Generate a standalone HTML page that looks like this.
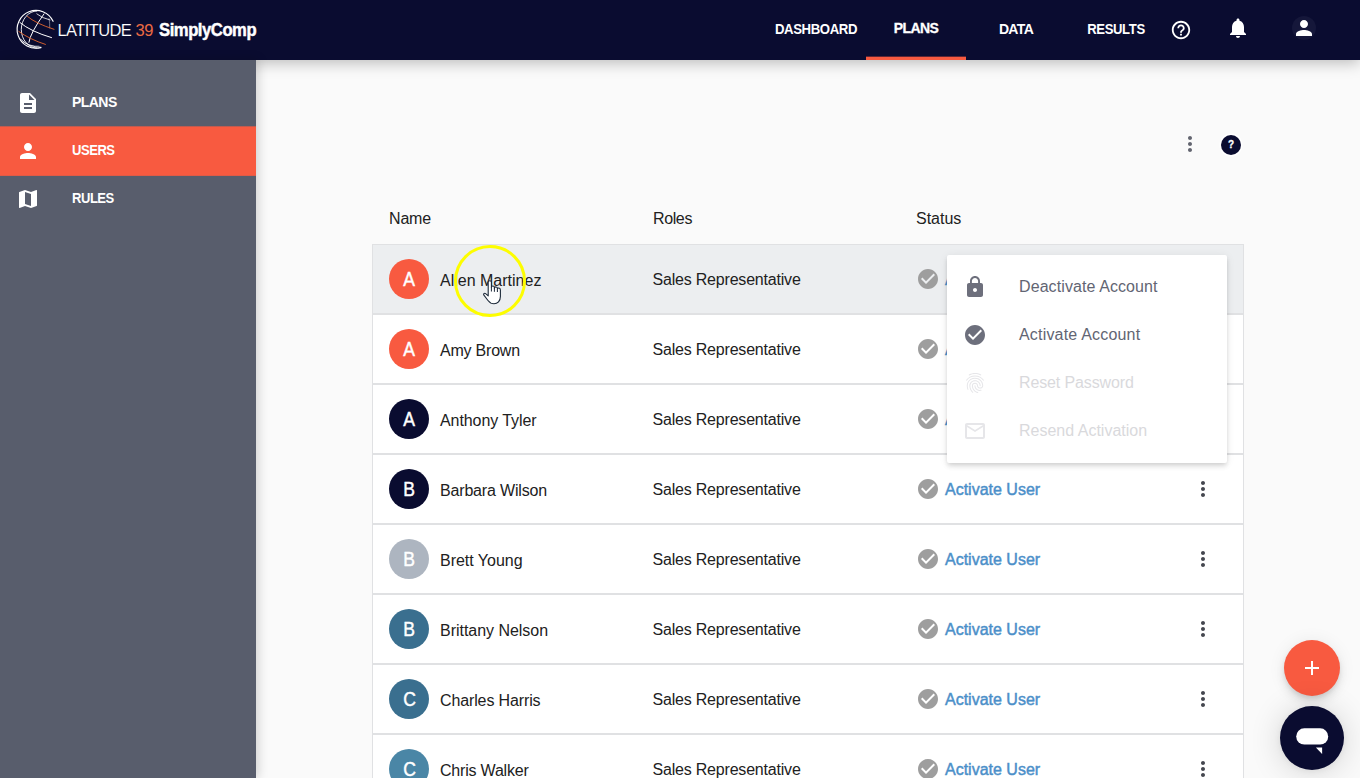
<!DOCTYPE html>
<html lang="en">
<head>
<meta charset="utf-8">
<title>SimplyComp - Users</title>
<style>
*{box-sizing:border-box;margin:0;padding:0}
html,body{width:1360px;height:778px;overflow:hidden;background:#fafafa;font-family:"Liberation Sans",Arial,sans-serif;color:#212121}
#top{position:absolute;left:0;top:0;width:1360px;height:60px;background:#0a0c30;z-index:10;box-shadow:0 3px 14px rgba(0,0,0,.25)}
#side{position:absolute;left:0;top:60px;width:256px;height:718px;background:#585d6c;z-index:11;box-shadow:2px 0 10px rgba(0,0,0,.18)}
.logo-t{position:absolute;top:0;height:60px;line-height:60px;white-space:nowrap;color:#fff}
.nav{position:absolute;top:0;height:60px;line-height:58px;color:#fff;font-weight:bold;font-size:14px;text-align:center;white-space:nowrap}
.nav.act{border-bottom:3px solid #f85a40;-webkit-text-stroke:.3px #fff}
.nav.act:after{content:"";position:absolute;left:0;right:0;bottom:0;height:1px;background:rgba(248,90,64,.35)}
.sitem{position:absolute;left:0;width:256px;height:48px;line-height:48px;color:#fff;font-weight:bold;font-size:14px}
.sitem span{position:absolute;left:72px;top:-1px}
.sitem svg{position:absolute;left:16px;top:12px}
.sitem.act{background:linear-gradient(to bottom,rgba(248,90,64,.65) 0,rgba(248,90,64,.65) 1px,#f85a40 1px,#f85a40 49px,rgba(248,90,64,.85) 49px,rgba(248,90,64,.85) 50px)}
.sitem.act svg{top:13px}
.sitem.act span{top:0}
.th{position:absolute;top:209px;font-size:16px;line-height:19px;color:#212121}
.row{position:absolute;left:372px;width:872px;height:70px;border:1px solid #e0e1e3;background:#fff}
.row.hov{background:#eceef0}
.av{position:absolute;left:16px;top:14px;width:40px;height:40px;border-radius:50%;color:#fff;font-size:19.5px;line-height:41px;text-align:center;-webkit-text-stroke:.45px #fff}
.av b{display:inline-block;font-weight:normal;transform:translateX(.6px) scaleX(.9)}
.nm,.rl,.st{position:absolute;top:0;height:68px;line-height:68px;font-size:16px;white-space:nowrap}
.nm{left:67px;top:2px}
.rl{left:279.5px;top:1px;letter-spacing:-0.2px}
.st{left:572px;top:1px;color:#4b8fc9;-webkit-text-stroke:0.45px #4b8fc9}
.ck{position:absolute;left:543px;top:22px}
.kb{position:absolute;left:818px;top:22px}
#menu{position:absolute;left:947px;top:255px;width:280px;height:208px;background:#fff;border-radius:2px;z-index:8;box-shadow:0 2px 4px -1px rgba(0,0,0,.1),0 4px 5px rgba(0,0,0,.07),0 1px 10px rgba(0,0,0,.07)}
.mi{position:absolute;left:0;width:280px;height:48px;line-height:48px;font-size:16px;color:#626573}
.mi span{position:absolute;left:72px;top:0}
.mi svg{position:absolute;left:16px;top:12px}
.mi.dis{color:#d9d9dc}
</style>
</head>
<body>
<div id="main">
<div class="th" style="left:389px;letter-spacing:-.17px">Name</div><div class="th" style="left:653px;letter-spacing:-.38px">Roles</div><div class="th" style="left:916px">Status</div>
<div class="row hov" style="top:244px"><div class="av" style="background:#f85a40"><b>A</b></div><div class="nm" style="letter-spacing:0px">Allen Martinez</div><div class="rl">Sales Representative</div><svg class="ck" width="24" height="24" viewBox="0 0 24 24"><path fill="#9e9e9e" d="M12 2C6.48 2 2 6.48 2 12s4.48 10 10 10 10-4.48 10-10S17.52 2 12 2zm-2 15l-5-5 1.41-1.41L10 14.17l7.59-7.59L19 8l-9 9z"/></svg><div class="st">Activate User</div><svg class="kb" width="24" height="24" viewBox="0 0 24 24"><path fill="#45474f" d="M12 8c1.1 0 2-.9 2-2s-.9-2-2-2-2 .9-2 2 .9 2 2 2zm0 2c-1.1 0-2 .9-2 2s.9 2 2 2 2-.9 2-2-.9-2-2-2zm0 6c-1.1 0-2 .9-2 2s.9 2 2 2 2-.9 2-2-.9-2-2-2z"/></svg></div>
<div class="row" style="top:314px"><div class="av" style="background:#f85a40"><b>A</b></div><div class="nm" style="letter-spacing:-0.22px">Amy Brown</div><div class="rl">Sales Representative</div><svg class="ck" width="24" height="24" viewBox="0 0 24 24"><path fill="#9e9e9e" d="M12 2C6.48 2 2 6.48 2 12s4.48 10 10 10 10-4.48 10-10S17.52 2 12 2zm-2 15l-5-5 1.41-1.41L10 14.17l7.59-7.59L19 8l-9 9z"/></svg><div class="st">Activate User</div><svg class="kb" width="24" height="24" viewBox="0 0 24 24"><path fill="#45474f" d="M12 8c1.1 0 2-.9 2-2s-.9-2-2-2-2 .9-2 2 .9 2 2 2zm0 2c-1.1 0-2 .9-2 2s.9 2 2 2 2-.9 2-2-.9-2-2-2zm0 6c-1.1 0-2 .9-2 2s.9 2 2 2 2-.9 2-2-.9-2-2-2z"/></svg></div>
<div class="row" style="top:384px"><div class="av" style="background:#0a0c30"><b>A</b></div><div class="nm" style="letter-spacing:-0.08px">Anthony Tyler</div><div class="rl">Sales Representative</div><svg class="ck" width="24" height="24" viewBox="0 0 24 24"><path fill="#9e9e9e" d="M12 2C6.48 2 2 6.48 2 12s4.48 10 10 10 10-4.48 10-10S17.52 2 12 2zm-2 15l-5-5 1.41-1.41L10 14.17l7.59-7.59L19 8l-9 9z"/></svg><div class="st">Activate User</div><svg class="kb" width="24" height="24" viewBox="0 0 24 24"><path fill="#45474f" d="M12 8c1.1 0 2-.9 2-2s-.9-2-2-2-2 .9-2 2 .9 2 2 2zm0 2c-1.1 0-2 .9-2 2s.9 2 2 2 2-.9 2-2-.9-2-2-2zm0 6c-1.1 0-2 .9-2 2s.9 2 2 2 2-.9 2-2-.9-2-2-2z"/></svg></div>
<div class="row" style="top:454px"><div class="av" style="background:#0a0c30"><b>B</b></div><div class="nm" style="letter-spacing:-0.17px">Barbara Wilson</div><div class="rl">Sales Representative</div><svg class="ck" width="24" height="24" viewBox="0 0 24 24"><path fill="#9e9e9e" d="M12 2C6.48 2 2 6.48 2 12s4.48 10 10 10 10-4.48 10-10S17.52 2 12 2zm-2 15l-5-5 1.41-1.41L10 14.17l7.59-7.59L19 8l-9 9z"/></svg><div class="st">Activate User</div><svg class="kb" width="24" height="24" viewBox="0 0 24 24"><path fill="#45474f" d="M12 8c1.1 0 2-.9 2-2s-.9-2-2-2-2 .9-2 2 .9 2 2 2zm0 2c-1.1 0-2 .9-2 2s.9 2 2 2 2-.9 2-2-.9-2-2-2zm0 6c-1.1 0-2 .9-2 2s.9 2 2 2 2-.9 2-2-.9-2-2-2z"/></svg></div>
<div class="row" style="top:524px"><div class="av" style="background:#adb5c0"><b>B</b></div><div class="nm" style="letter-spacing:-0.02px">Brett Young</div><div class="rl">Sales Representative</div><svg class="ck" width="24" height="24" viewBox="0 0 24 24"><path fill="#9e9e9e" d="M12 2C6.48 2 2 6.48 2 12s4.48 10 10 10 10-4.48 10-10S17.52 2 12 2zm-2 15l-5-5 1.41-1.41L10 14.17l7.59-7.59L19 8l-9 9z"/></svg><div class="st">Activate User</div><svg class="kb" width="24" height="24" viewBox="0 0 24 24"><path fill="#45474f" d="M12 8c1.1 0 2-.9 2-2s-.9-2-2-2-2 .9-2 2 .9 2 2 2zm0 2c-1.1 0-2 .9-2 2s.9 2 2 2 2-.9 2-2-.9-2-2-2zm0 6c-1.1 0-2 .9-2 2s.9 2 2 2 2-.9 2-2-.9-2-2-2z"/></svg></div>
<div class="row" style="top:594px"><div class="av" style="background:#3a6f8f"><b>B</b></div><div class="nm" style="letter-spacing:-0.03px">Brittany Nelson</div><div class="rl">Sales Representative</div><svg class="ck" width="24" height="24" viewBox="0 0 24 24"><path fill="#9e9e9e" d="M12 2C6.48 2 2 6.48 2 12s4.48 10 10 10 10-4.48 10-10S17.52 2 12 2zm-2 15l-5-5 1.41-1.41L10 14.17l7.59-7.59L19 8l-9 9z"/></svg><div class="st">Activate User</div><svg class="kb" width="24" height="24" viewBox="0 0 24 24"><path fill="#45474f" d="M12 8c1.1 0 2-.9 2-2s-.9-2-2-2-2 .9-2 2 .9 2 2 2zm0 2c-1.1 0-2 .9-2 2s.9 2 2 2 2-.9 2-2-.9-2-2-2zm0 6c-1.1 0-2 .9-2 2s.9 2 2 2 2-.9 2-2-.9-2-2-2z"/></svg></div>
<div class="row" style="top:664px"><div class="av" style="background:#3a6f8f"><b>C</b></div><div class="nm" style="letter-spacing:-0.125px">Charles Harris</div><div class="rl">Sales Representative</div><svg class="ck" width="24" height="24" viewBox="0 0 24 24"><path fill="#9e9e9e" d="M12 2C6.48 2 2 6.48 2 12s4.48 10 10 10 10-4.48 10-10S17.52 2 12 2zm-2 15l-5-5 1.41-1.41L10 14.17l7.59-7.59L19 8l-9 9z"/></svg><div class="st">Activate User</div><svg class="kb" width="24" height="24" viewBox="0 0 24 24"><path fill="#45474f" d="M12 8c1.1 0 2-.9 2-2s-.9-2-2-2-2 .9-2 2 .9 2 2 2zm0 2c-1.1 0-2 .9-2 2s.9 2 2 2 2-.9 2-2-.9-2-2-2zm0 6c-1.1 0-2 .9-2 2s.9 2 2 2 2-.9 2-2-.9-2-2-2z"/></svg></div>
<div class="row" style="top:734px"><div class="av" style="background:#4a86a6"><b>C</b></div><div class="nm" style="letter-spacing:-0.2px">Chris Walker</div><div class="rl">Sales Representative</div><svg class="ck" width="24" height="24" viewBox="0 0 24 24"><path fill="#9e9e9e" d="M12 2C6.48 2 2 6.48 2 12s4.48 10 10 10 10-4.48 10-10S17.52 2 12 2zm-2 15l-5-5 1.41-1.41L10 14.17l7.59-7.59L19 8l-9 9z"/></svg><div class="st">Activate User</div><svg class="kb" width="24" height="24" viewBox="0 0 24 24"><path fill="#45474f" d="M12 8c1.1 0 2-.9 2-2s-.9-2-2-2-2 .9-2 2 .9 2 2 2zm0 2c-1.1 0-2 .9-2 2s.9 2 2 2 2-.9 2-2-.9-2-2-2zm0 6c-1.1 0-2 .9-2 2s.9 2 2 2 2-.9 2-2-.9-2-2-2z"/></svg></div>
<svg style="position:absolute;left:1178px;top:132px" width="24" height="24" viewBox="0 0 24 24"><path fill="#62646f" d="M12 8c1.100 0 2-.9 2-2s-.9-2-2-2-2 .9-2 2 .9 2 2 2zm0 2c-1.100 0-2 .9-2 2s.9 2 2 2 2-.9 2-2-.9-2-2-2zm0 6c-1.100 0-2 .9-2 2s.9 2 2 2 2-.9 2-2-.9-2-2-2z"/></svg>
<div style="position:absolute;left:1221px;top:135px;width:20px;height:20px;border-radius:50%;background:#0a0c30;color:#fff;font-size:10px;font-weight:bold;line-height:20px;text-align:center;box-shadow:0 0 0 1.500px #fff;-webkit-text-stroke:.3px #fff">?</div>
<div id="menu">
<div class="mi" style="top:8px"><svg width="24" height="24" viewBox="0 0 24 24"><path fill="#6d6f7c" d="M18 8h-1V6c0-2.760-2.240-5-5-5S7 3.240 7 6v2H6c-1.100 0-2 .9-2 2v10c0 1.100.9 2 2 2h12c1.100 0 2-.9 2-2V10c0-1.100-.9-2-2-2zm-6 9c-1.100 0-2-.9-2-2s.9-2 2-2 2 .9 2 2-.9 2-2 2zm3.100-9H8.900V6c0-1.710 1.390-3.100 3.100-3.100 1.710 0 3.100 1.390 3.100 3.100v2z"/></svg><span style="letter-spacing:.09px">Deactivate Account</span></div>
<div class="mi" style="top:56px"><svg width="24" height="24" viewBox="0 0 24 24"><path fill="#6d6f7c" d="M12 2C6.480 2 2 6.480 2 12s4.480 10 10 10 10-4.480 10-10S17.520 2 12 2zm-2 15l-5-5 1.410-1.410L10 14.170l7.590-7.590L19 8l-9 9z"/></svg><span style="letter-spacing:.19px">Activate Account</span></div>
<div class="mi dis" style="top:104px"><svg width="24" height="24" viewBox="0 0 24 24"><path fill="#e6e6e9" d="M17.81 4.47c-.08 0-.16-.02-.23-.06C15.66 3.42 14 3 12.01 3c-1.980 0-3.860.47-5.570 1.410-.24.130-.54.040-.68-.2-.130-.24-.04-.55.2-.68C7.820 2.520 9.860 2 12.010 2c2.130 0 3.990.47 6.030 1.520.25.130.34.430.21.670-.9.180-.26.280-.44.280zM3.500 9.720c-.1 0-.2-.030-.29-.09-.23-.16-.28-.47-.12-.7.990-1.400 2.250-2.500 3.750-3.270C9.980 4.040 14 4.030 17.150 5.650c1.500.77 2.760 1.860 3.750 3.250.16.220.11.540-.12.700-.23.160-.54.110-.7-.12-.9-1.260-2.040-2.250-3.390-2.940-2.870-1.470-6.540-1.470-9.400.010-1.360.7-2.500 1.700-3.400 2.960-.8.140-.23.210-.39.210zm6.250 12.070c-.13 0-.26-.05-.35-.15-.87-.87-1.340-1.430-2.010-2.640-.69-1.230-1.050-2.730-1.050-4.340 0-2.970 2.540-5.390 5.660-5.390s5.660 2.420 5.660 5.390c0 .28-.22.500-.5.500s-.5-.22-.5-.5c0-2.420-2.090-4.390-4.660-4.390-2.570 0-4.660 1.970-4.660 4.390 0 1.440.32 2.770.93 3.850.64 1.150 1.080 1.640 1.850 2.420.19.200.19.510 0 .71-.11.100-.24.150-.37.150zm7.170-1.850c-1.190 0-2.240-.3-3.100-.89-1.490-1.010-2.380-2.650-2.380-4.390 0-.28.220-.5.5-.5s.5.220.5.500c0 1.410.72 2.740 1.940 3.560.71.480 1.540.71 2.540.71.240 0 .64-.03 1.040-.1.270-.5.530.13.580.41.050.27-.13.530-.41.580-.57.110-1.070.12-1.210.12zM14.910 22c-.04 0-.09-.010-.13-.02-1.590-.44-2.630-1.030-3.720-2.100-1.400-1.390-2.170-3.240-2.170-5.220 0-1.620 1.380-2.940 3.080-2.940 1.700 0 3.080 1.320 3.080 2.940 0 1.070.93 1.940 2.080 1.940s2.080-.87 2.080-1.940c0-3.770-3.250-6.830-7.250-6.830-2.840 0-5.440 1.580-6.610 4.030-.39.810-.59 1.760-.59 2.800 0 .78.070 2.010.67 3.610.1.260-.3.550-.29.640-.26.100-.55-.04-.64-.29-.49-1.310-.73-2.610-.73-3.960 0-1.200.23-2.290.68-3.240 1.330-2.790 4.280-4.600 7.510-4.600 4.550 0 8.250 3.510 8.250 7.830 0 1.620-1.380 2.940-3.080 2.940s-3.080-1.320-3.080-2.940c0-1.070-.93-1.940-2.080-1.940s-2.080.87-2.080 1.940c0 1.710.66 3.310 1.870 4.510.95.940 1.860 1.460 3.270 1.850.27.070.42.350.35.610-.5.230-.26.380-.47.380z"/></svg><span style="letter-spacing:-.12px">Reset Password</span></div>
<div class="mi dis" style="top:152px"><svg width="24" height="24" viewBox="0 0 24 24"><path fill="#e6e6e9" d="M20 4H4c-1.100 0-1.990.9-1.990 2L2 18c0 1.100.9 2 2 2h16c1.100 0 2-.9 2-2V6c0-1.100-.9-2-2-2zm0 14H4V8l8 5 8-5v10zm-8-7L4 6h16l-8 5z"/></svg><span>Resend Activation</span></div>
</div>
<div style="position:absolute;left:1284px;top:640px;width:56px;height:56px;border-radius:50%;background:#f85a40;box-shadow:0 3px 5px -1px rgba(0,0,0,.1),0 6px 10px rgba(0,0,0,.08),0 1px 18px rgba(0,0,0,.07);z-index:9"><svg style="position:absolute;left:16px;top:16px" width="24" height="24" viewBox="0 0 24 24"><path fill="#fff" d="M19 13h-6v6h-2v-6H5v-2h6V5h2v6h6v2z"/></svg></div>
<div style="position:absolute;left:1280px;top:706px;width:64px;height:64px;border-radius:50%;background:#0a0c30;z-index:9;box-shadow:0 1px 6px rgba(0,0,0,.06),0 2px 32px rgba(0,0,0,.16)"><svg style="position:absolute;left:0;top:0" width="64" height="64" viewBox="0 0 64 64"><rect x="16.200" y="22.300" width="32" height="16.200" rx="8.100" fill="#fff"/><path d="M35.900 41.600h6.200v6.500z" fill="#fff"/></svg></div>
<div style="position:absolute;left:454px;top:244.500px;width:72px;height:72px;border-radius:50%;border:3.800px solid #fdfd00;z-index:7"></div>
<svg style="position:absolute;left:483px;top:280px;z-index:8" width="19" height="25" viewBox="0 0 19 25"><path d="M5.200 2.300C5.200 .2 8.400 .2 8.400 2.300V7.400C8.400 5.600 11.400 5.600 11.400 7.600V8.400C11.400 6.400 14.400 6.400 14.400 8.600V9.300C14.400 7.400 17.400 7.600 17.400 10V16.500C17.400 21 14.500 23.800 11 23.800C8 23.800 6.500 22.500 5 20.500L.9 15.200C.2 14.200 1.200 12.600 2.600 13.600L5.200 15.800Z" fill="#fff" stroke="#1b2838" stroke-width="1.100" stroke-linejoin="round"/><path d="M8.400 7.400V11.500M11.400 8.400V11.800M14.400 9.300V12" stroke="#1b2838" stroke-width="1" fill="none"/></svg>
</div>
<div id="side">
<div class="sitem" style="top:19px"><svg width="24" height="24" viewBox="0 0 24 24"><path fill="#fff" d="M14 2H6c-1.100 0-1.990.9-1.990 2L4 20c0 1.100.890 2 1.990 2H18c1.100 0 2-.9 2-2V8l-6-6zm2 16H8v-2h8v2zm0-4H8v-2h8v2zm-3-5V3.500L18.500 9H13z"/></svg><span style="letter-spacing:-0.55px">PLANS</span></div>
<div class="sitem act" style="top:66px;height:50px"><svg width="24" height="24" viewBox="0 0 24 24"><path fill="#fff" d="M12 12c2.210 0 4-1.790 4-4s-1.790-4-4-4-4 1.790-4 4 1.790 4 4 4zm0 2c-2.670 0-8 1.340-8 4v2h16v-2c0-2.660-5.330-4-8-4z"/></svg><span style="letter-spacing:-0.5px;transform:scaleX(.93);transform-origin:0 50%">USERS</span></div>
<div class="sitem" style="top:115px"><svg width="24" height="24" viewBox="0 0 24 24"><path fill="#fff" d="M20.500 3l-.160.030L15 5.100 9 3 3.360 4.900c-.210.070-.360.250-.360.480V20.500c0 .280.220.5.500.5l.160-.030L9 18.900l6 2.100 5.640-1.900c.210-.070.360-.250.360-.480V3.500c0-.280-.220-.5-.5-.5zM15 19l-6-2.110V5l6 2.110V19z"/></svg><span style="letter-spacing:-0.5px;transform:scaleX(.93);transform-origin:0 50%">RULES</span></div>
</div>
<div id="top">
<svg style="position:absolute;left:8px;top:2px" width="60" height="56" viewBox="0 0 60 56" fill="none" stroke="#fff" stroke-width="1" stroke-linecap="round">
<path d="M45.1 19.3A18.9 18.9 0 1 0 32.9 45.6" stroke-width="1.15"/>
<path d="M28.8 9A15.5 18.5 0 0 0 28.8 46" stroke-width=".9"/>
<path d="M36 11.9Q22 31.500 20.9 40.3"/>
<path d="M11.9 20.5Q22.7 29.500 43.5 35.6"/>
<path d="M28.8 11.9Q33.6 16 42 18" stroke-width=".8"/>
<path d="M41 16.500Q42 21 41.7 26" stroke-width=".6" opacity=".7"/>
<path d="M12.9 37.4Q20.2 45 33 45.3" stroke-width=".8"/>
<path d="M15 40Q22 44.500 31 44.2" stroke-width=".6" opacity=".8"/>
<path d="M19.4 14.4Q27.7 21.500 46 27.3" stroke="#d9622f" stroke-width=".95"/>
<path d="M10.8 29.500Q21.9 37.4 37.4 42.4" stroke="#d9622f" stroke-width=".95"/>
</svg>
<div class="logo-t" style="left:57.5px;font-size:16.5px;letter-spacing:-0.6px;-webkit-text-stroke:0.12px #0a0c30">LATITUDE</div><div class="logo-t" style="left:135.5px;font-size:16.5px;letter-spacing:-0.5px;color:#ea6a43">39</div>
<div class="logo-t" style="left:158.5px;font-size:18px;font-weight:bold;letter-spacing:-0.5px;transform:scaleX(.925);transform-origin:0 50%;line-height:61px;-webkit-text-stroke:.45px #fff">SimplyComp</div>
<div class="nav" style="left:766px;width:100px;letter-spacing:-0.4px;transform:scaleX(.94)">DASHBOARD</div>
<div class="nav act" style="left:866px;width:100px;line-height:56px;letter-spacing:-0.55px">PLANS</div>
<div class="nav" style="left:966px;width:100px;letter-spacing:-0.65px">DATA</div>
<div class="nav" style="left:1066px;width:100px;letter-spacing:-0.4px;transform:scaleX(.935)">RESULTS</div>
<svg style="position:absolute;left:1170px;top:19px" width="22" height="22" viewBox="0 0 24 24"><path fill="#fff" d="M11 18h2v-2h-2v2zm1-16C6.48 2 2 6.48 2 12s4.48 10 10 10 10-4.48 10-10S17.52 2 12 2zm0 18c-4.41 0-8-3.590-8-8s3.590-8 8-8 8 3.590 8 8-3.590 8-8 8zm0-14c-2.210 0-4 1.790-4 4h2c0-1.100.9-2 2-2s2 .9 2 2c0 2-3 1.750-3 5h2c0-2.250 3-2.500 3-5 0-2.210-1.790-4-4-4z"/></svg>
<svg style="position:absolute;left:1226px;top:16px" width="24" height="24" viewBox="0 0 24 24"><path fill="#fff" d="M12 22c1.100 0 2-.9 2-2h-4c0 1.100.890 2 2 2zm6-6v-5c0-3.070-1.640-5.640-4.500-6.320V4c0-.830-.670-1.500-1.500-1.500s-1.500.670-1.500 1.500v.680C7.630 5.360 6 7.920 6 11v5l-2 2v1h16v-1l-2-2z"/></svg>
<div style="position:absolute;left:1292px;top:16px;width:24px;height:24px;border-radius:50%;background:#15173a"></div>
<svg style="position:absolute;left:1292px;top:16px" width="24" height="24" viewBox="0 0 24 24"><path fill="#fff" d="M12 12c2.210 0 4-1.790 4-4s-1.790-4-4-4-4 1.790-4 4 1.790 4 4 4zm0 2c-2.670 0-8 1.340-8 4v2h16v-2c0-2.660-5.330-4-8-4z"/></svg>
</div>
</body>
</html>
